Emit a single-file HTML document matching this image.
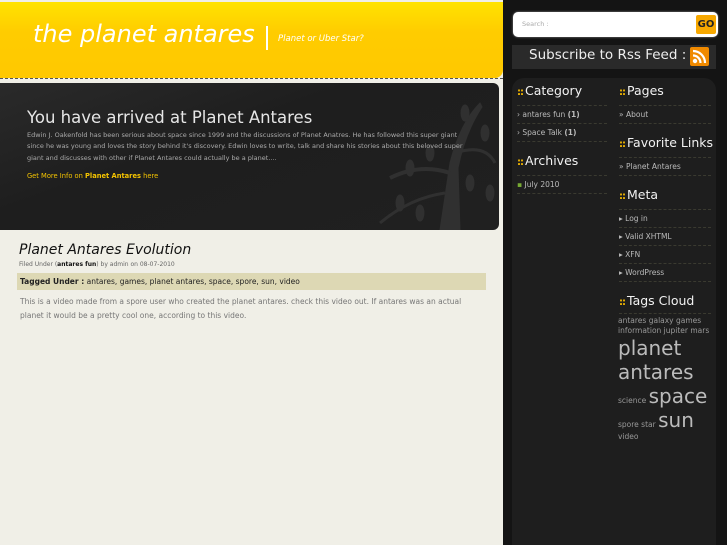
<!DOCTYPE html>
<html><head><meta charset="utf-8"><style>
*{margin:0;padding:0;box-sizing:border-box}
body{width:727px;height:545px;overflow:hidden;background:#f0efe7;font-family:"DejaVu Sans","Liberation Sans",sans-serif;position:relative}
.hdr{position:absolute;left:0;top:2px;width:503px;height:76px;background:linear-gradient(#ffe300,#ffcc00 40%,#ffc800);border-bottom-right-radius:8px}
.hdr .t{position:absolute;left:33px;top:18px;font-size:24px;font-style:italic;color:#fff}
.hdr .bar{position:absolute;left:266px;top:24px;width:2px;height:24px;background:#fff}
.hdr .s{position:absolute;left:278px;top:32px;font-size:8.5px;font-style:italic;color:#fff}
.dash{position:absolute;left:0;top:78px;width:503px;border-top:1px dashed #555}
.hero{position:absolute;left:0;top:83px;width:499px;height:147px;background:linear-gradient(160deg,#2a2a2a,#1e1e1e 40%,#202020);border-radius:0 6px 6px 0;overflow:hidden}
.hero h1{position:absolute;left:27px;top:25px;font-weight:normal;font-size:16.5px;color:#e6e6e6}
.hero p{position:absolute;left:27px;top:47px;width:440px;font-size:6.5px;line-height:11.3px;color:#aaa}
.hero .more{position:absolute;left:27px;top:89px;font-size:6.7px;color:#f5c400}
.side{position:absolute;left:503px;top:0;width:224px;height:545px;background:#141414}
.side .panel{position:absolute;left:9px;top:78px;width:204px;height:467px;background:#1e1e1e;border-radius:12px 12px 0 0}
.search{position:absolute;left:513px;top:12px;width:205px;height:25px;background:#fff;border-radius:5px;box-shadow:0 0 2px #888}
.search span{position:absolute;left:9px;top:8px;font-size:6.5px;color:#aaa}
.go{position:absolute;right:2px;top:3px;width:20px;height:19px;background:#f7a800;border-radius:2px;font-size:10px;color:#222;text-align:center;line-height:19px;font-weight:bold}
.rss{position:absolute;left:512px;top:45px;width:204px;height:24px;background:#2a2a2a;color:#eee;font-size:13.5px;padding:2px 0 0 17px}
.rss i{position:absolute;left:178px;top:2px;width:19px;height:19px;background:#f08a00;border-radius:2px}
h3{position:absolute;font-size:12.5px;font-weight:normal;color:#f2f2f2}
h3 b{color:#f5b800;font-size:10px;font-weight:bold;margin-right:2px;letter-spacing:-1px}
.li{position:absolute;font-size:7.5px;color:#bbb;border-top:1px dashed #3a3a30;padding-top:4px;height:18px}
.tags{position:absolute;left:618px;top:316px;width:100px;color:#999;font-size:7.5px;line-height:10px}
</style></head><body>
<div class="hdr"><div class="t">the planet antares</div><div class="bar"></div><div class="s">Planet or Uber Star?</div></div>
<div class="dash"></div>
<div class="hero">
<svg style="position:absolute;left:310px;top:0" width="190" height="147"><g fill="#303030" stroke="#303030"><path d="M130 147 L140 80 Q150 40 170 20 L172 24 Q155 50 148 85 L150 147Z"/><path d="M140 90 Q110 80 80 95" stroke-width="4" fill="none"/><path d="M145 70 Q175 60 185 80" stroke-width="3" fill="none"/><path d="M135 110 Q100 115 70 140" stroke-width="3" fill="none"/><ellipse cx="100" cy="85" rx="4" ry="8"/><ellipse cx="120" cy="70" rx="4" ry="8"/><ellipse cx="175" cy="50" rx="4" ry="8"/><ellipse cx="90" cy="120" rx="4" ry="8"/><ellipse cx="160" cy="100" rx="4" ry="8"/><ellipse cx="180" cy="110" rx="4" ry="8"/><ellipse cx="110" cy="130" rx="4" ry="8"/><ellipse cx="155" cy="30" rx="4" ry="8"/></g></svg>
<h1>You have arrived at Planet Antares</h1>
<p>Edwin J. Oakenfold has been serious about space since 1999 and the discussions of Planet Anatres. He has followed this super giant since he was young and loves the story behind it's discovery. Edwin loves to write, talk and share his stories about this beloved super giant and discusses with other if Planet Antares could actually be a planet....</p>
<div class="more">Get More Info on <b>Planet Antares</b> here</div>
</div>
<div style="position:absolute;left:19px;top:242px;font-size:14px;font-style:italic;color:#111">Planet Antares Evolution</div>
<div style="position:absolute;left:19px;top:261px;font-size:6px;color:#666">Filed Under (<b style="color:#111">antares fun</b>) by admin on 08-07-2010</div>
<div style="position:absolute;left:17px;top:273px;width:469px;height:17px;background:#ddd8b4;font-size:7.5px;color:#222;padding:4px 3px"><b>Tagged Under :</b> antares, games, planet antares, space, spore, sun, video</div>
<div style="position:absolute;left:20px;top:295px;width:460px;font-size:7.5px;line-height:13.5px;color:#777">This is a video made from a spore user who created the planet antares. check this video out. If antares was an actual planet it would be a pretty cool one, according to this video.</div>
<div class="side"><div class="panel"></div></div>
<div class="search"><span>Search :</span><div class="go">GO</div></div>
<div class="rss">Subscribe to Rss Feed :<i><svg width="19" height="19"><circle cx="5" cy="14" r="2.2" fill="#fff"/><path d="M3 8.5a7.5 7.5 0 0 1 7.5 7.5M3 4a12 12 0 0 1 12 12" stroke="#fff" stroke-width="2.2" fill="none"/></svg></i></div>
<h3 style="left:517px;top:83px"><b>::</b>Category</h3>
<div class="li" style="left:517px;top:105px;width:90px">› antares fun <b>(1)</b></div>
<div class="li" style="left:517px;top:123px;width:90px">› Space Talk <b>(1)</b></div>
<div class="li" style="left:517px;top:141px;width:90px;height:1px"></div>
<h3 style="left:517px;top:153px"><b>::</b>Archives</h3>
<div class="li" style="left:517px;top:175px;width:90px"><span style="color:#7a3">▪</span> July 2010</div>
<div class="li" style="left:517px;top:193px;width:90px;height:1px"></div>
<h3 style="left:619px;top:83px"><b>::</b>Pages</h3>
<div class="li" style="left:619px;top:105px;width:92px">» About</div>
<div class="li" style="left:619px;top:123px;width:92px;height:1px"></div>
<h3 style="left:619px;top:135px"><b>::</b>Favorite Links</h3>
<div class="li" style="left:619px;top:157px;width:92px">» Planet Antares</div>
<div class="li" style="left:619px;top:175px;width:92px;height:1px"></div>
<h3 style="left:619px;top:187px"><b>::</b>Meta</h3>
<div class="li" style="left:619px;top:209px;width:92px">▸ Log in</div>
<div class="li" style="left:619px;top:227px;width:92px">▸ Valid XHTML</div>
<div class="li" style="left:619px;top:245px;width:92px">▸ XFN</div>
<div class="li" style="left:619px;top:263px;width:92px">▸ WordPress</div>
<div class="li" style="left:619px;top:281px;width:92px;height:1px"></div>
<h3 style="left:619px;top:293px"><b>::</b>Tags Cloud</h3>
<div class="li" style="left:619px;top:313px;width:92px;height:1px"></div>
<div class="tags">antares galaxy games information jupiter mars<br><span style="font-size:20px;line-height:24px;color:#bbb">planet antares</span><br>science <span style="font-size:20px;line-height:24px;color:#bbb">space</span><br>spore star <span style="font-size:20px;line-height:24px;color:#bbb">sun</span><br>video</div>
</body></html>
